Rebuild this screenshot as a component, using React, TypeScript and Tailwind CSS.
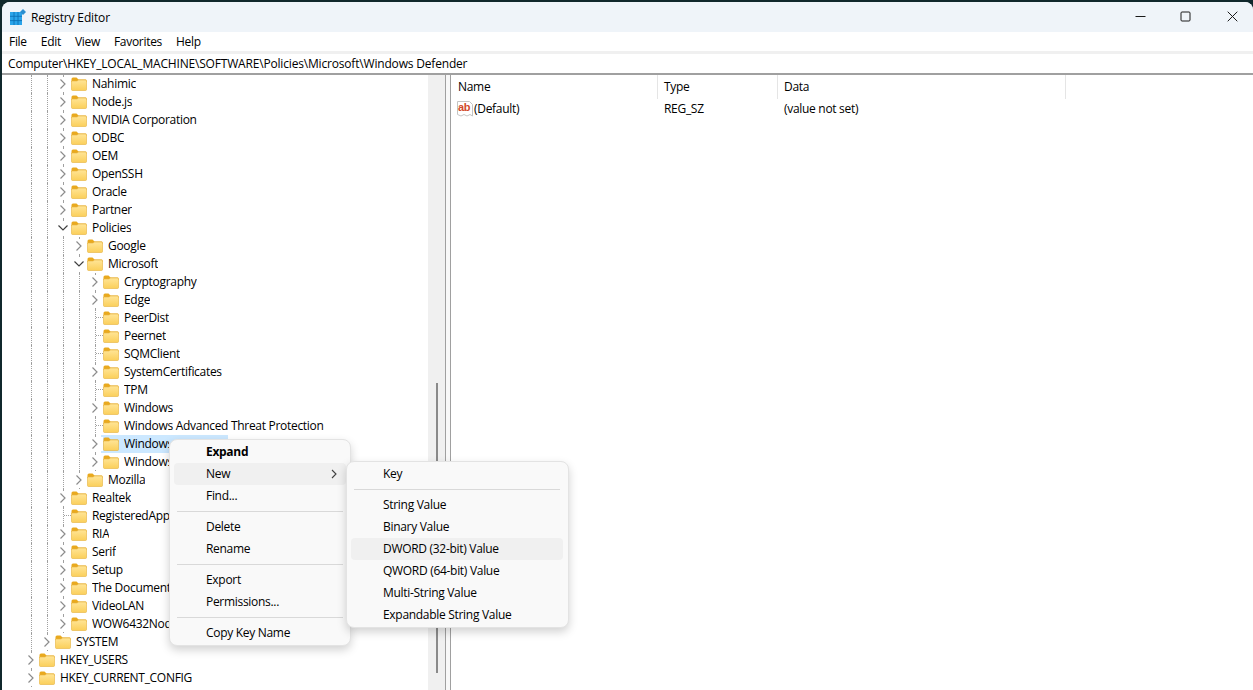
import { useId } from 'react';

type Node = { name: string; level: number; state?: 'closed' | 'open' | 'leaf'; selected?: boolean; clip?: string };

// clip: these labels run under the context menu
const rows: Node[] = [
  { name: 'Nahimic', level: 3 },
  { name: 'Node.js', level: 3 },
  { name: 'NVIDIA Corporation', level: 3 },
  { name: 'ODBC', level: 3 },
  { name: 'OEM', level: 3 },
  { name: 'OpenSSH', level: 3 },
  { name: 'Oracle', level: 3 },
  { name: 'Partner', level: 3 },
  { name: 'Policies', level: 3, state: 'open' },
  { name: 'Google', level: 4 },
  { name: 'Microsoft', level: 4, state: 'open' },
  { name: 'Cryptography', level: 5 },
  { name: 'Edge', level: 5 },
  { name: 'PeerDist', level: 5, state: 'leaf' },
  { name: 'Peernet', level: 5, state: 'leaf' },
  { name: 'SQMClient', level: 5, state: 'leaf' },
  { name: 'SystemCertificates', level: 5 },
  { name: 'TPM', level: 5, state: 'leaf' },
  { name: 'Windows', level: 5 },
  { name: 'Windows Advanced Threat Protection', level: 5, state: 'leaf' },
  { name: 'Windows Defender', level: 5, selected: true, clip: 'max-w-[45px]' },
  { name: 'Windows NT', level: 5, clip: 'max-w-[45px]' },
  { name: 'Mozilla', level: 4 },
  { name: 'Realtek', level: 3 },
  { name: 'RegisteredApplications', level: 3, state: 'leaf', clip: 'max-w-[77px]' },
  { name: 'RIA', level: 3 },
  { name: 'Serif', level: 3 },
  { name: 'Setup', level: 3 },
  { name: 'The Document Foundation', level: 3, clip: 'max-w-[77px]' },
  { name: 'VideoLAN', level: 3 },
  { name: 'WOW6432Node', level: 3, clip: 'max-w-[77px]' },
  { name: 'SYSTEM', level: 2 },
  { name: 'HKEY_USERS', level: 1 },
  { name: 'HKEY_CURRENT_CONFIG', level: 1 },
];

const Folder = () => {
  const id = useId();
  return (
    <svg width="16" height="14" viewBox="0 0 16 14" className="shrink-0">
      <defs>
        <linearGradient id={id} x1="0" y1="0" x2="0" y2="1">
          <stop offset="0" stopColor="#ffe597" />
          <stop offset="1" stopColor="#fbcf5a" />
        </linearGradient>
      </defs>
      <path d="M0.5 2 Q0.5 0.5 2 0.5 H5.5 L7.5 2.5 H14.5 Q15.5 2.5 15.5 3.5 V5 H0.5 Z" fill="#e9a91e" />
      <path d="M0.5 4 H6 L7.5 3 H14.5 Q15.5 3 15.5 4 V12.5 Q15.5 13.5 14.5 13.5 H1.5 Q0.5 13.5 0.5 12.5 Z" fill={`url(#${id})`} stroke="#e5b23c" strokeWidth="0.6" />
    </svg>
  );
};

const Guide = () => (
  <div className="w-4 h-full shrink-0 pl-2">
    <div className="h-full border-l border-dotted border-[#a0a0a0]" />
  </div>
);

const Toggle = ({ state }: { state: 'closed' | 'open' | 'leaf' }) => {
  if (state === 'leaf') {
    return (
      <div className="w-4 h-full shrink-0 pl-2">
        <div className="h-full border-l border-dotted border-[#a0a0a0]">
          <div className="h-[9px] border-b border-dotted border-[#a0a0a0]" />
        </div>
      </div>
    );
  }
  return (
    <div className="relative w-4 h-full shrink-0 pl-2">
      <div className="h-full border-l border-dotted border-[#a0a0a0]" />
      <div className="absolute inset-x-0 top-[2px] h-[14px] bg-white flex items-center justify-center">
        {state === 'open' ? (
          <svg width="10" height="10" viewBox="0 0 10 10"><path d="M0.5 2.5 L5 7 L9.5 2.5" fill="none" stroke="#404040" strokeWidth="1.2" /></svg>
        ) : (
          <svg width="10" height="10" viewBox="0 0 10 10"><path d="M2.5 0.5 L7 5 L2.5 9.5" fill="none" stroke="#8c8c8c" strokeWidth="1.2" /></svg>
        )}
      </div>
    </div>
  );
};

const TreeRow = ({ node }: { node: Node }) => (
  <div className="flex h-[18px] items-center pl-[5px] whitespace-nowrap">
    {Array.from({ length: node.level }, (_, k) => (k === 0 ? <div key={k} className="w-4 shrink-0" /> : <Guide key={k} />))}
    <Toggle state={node.state ?? 'closed'} />
    <div className={`flex h-full items-center ${node.selected ? 'bg-[#cce8ff] w-[127px] -ml-[2px] pl-[2px]' : ''}`}>
      <Folder />
      <span className={`ml-[5px] overflow-hidden text-[#000] ${node.clip ?? ''}`}>{node.name}</span>
    </div>
  </div>
);

const MenuItem = ({ label, bold, hot, arrow }: { label: string; bold?: boolean; hot?: boolean; arrow?: boolean }) => (
  <div className={`flex h-[22px] items-center justify-between rounded-[4px] pl-[32px] pr-[8px] ${hot ? 'bg-[#f0f0f0]' : ''} ${bold ? 'font-bold' : ''}`}>
    <span>{label}</span>
    {arrow && (
      <svg width="8" height="10" viewBox="0 0 8 10"><path d="M2 1 L6 5 L2 9" fill="none" stroke="#404040" strokeWidth="1.1" /></svg>
    )}
  </div>
);

const MenuSep = () => (
  <div className="h-[9px] flex items-center px-[3px]">
    <div className="h-px w-full bg-[#d9d9d9]" />
  </div>
);

export default function App() {
  return (
    <div
      className="h-[690px] w-[1253px] overflow-hidden bg-[#10282c] pl-[2px] pt-[2px] text-[12px] leading-[18px] text-[#000] tracking-[-0.3px]"
      style={{ fontFamily: '"Open Sans", "Liberation Sans", sans-serif' }}
    >
      <div className="relative flex h-full flex-col overflow-hidden rounded-tl-[8px] rounded-tr-[8px] bg-white">
        {/* title bar */}
        <div className="flex h-[30px] shrink-0 items-center bg-[#eff4f9]">
          <svg width="17" height="16" viewBox="0 0 17 16" className="ml-[7px]">
            <path d="M1 3 H13 V16 H1 Z" fill="#2aa4ea" />
            <path d="M5 3 V16 M9 3 V16 M1 7.3 H13 M1 11.6 H13" stroke="#0a6cb0" strokeWidth="0.8" />
            <path d="M14 0 L17 3 L14 6 L11 3 Z" fill="#2a8fd0" />
          </svg>
          <span className="ml-[5px] mt-[1px] tracking-[-0.15px]">Registry Editor</span>
          <div className="ml-auto -mt-[2px] flex items-center gap-[35px] pr-[15px]">
            <svg width="11" height="11" viewBox="0 0 11 11"><path d="M0.5 5.5 H10.5" stroke="#1a1a1a" /></svg>
            <svg width="11" height="11" viewBox="0 0 11 11" className="-translate-x-px"><rect x="1" y="1" width="9" height="9" rx="1" fill="none" stroke="#1a1a1a" /></svg>
            <svg width="11" height="11" viewBox="0 0 11 11"><path d="M0.7 0.7 L10.3 10.3 M10.3 0.7 L0.7 10.3" stroke="#1a1a1a" /></svg>
          </div>
        </div>
        {/* menu bar */}
        <div className="flex h-[18px] shrink-0 items-center gap-[14px] pl-[7px] mt-[1px]">
          <span>File</span>
          <span>Edit</span>
          <span>View</span>
          <span>Favorites</span>
          <span>Help</span>
        </div>
        <div className="h-[3px] shrink-0 bg-[#f0f0f0]" />
        {/* address bar */}
        <div className="flex h-[19px] shrink-0 items-center pl-[6px] tracking-[-0.18px]">Computer\HKEY_LOCAL_MACHINE\SOFTWARE\Policies\Microsoft\Windows Defender</div>
        <div className="h-[2px] shrink-0 bg-[#a0a0a0]" />

        <div className="flex min-h-0 flex-1">
          {/* tree */}
          <div className="w-[426px] shrink-0 overflow-hidden">
            {rows.map((node) => (
              <TreeRow key={node.name} node={node} />
            ))}
          </div>
          {/* scrollbar */}
          <div className="flex w-[17px] shrink-0 justify-center bg-[#f0f0f0] pt-[308px]">
            <div className="h-[290px] w-[2px] bg-[#8a8a8a]" />
          </div>
          {/* splitter */}
          <div className="w-[6px] shrink-0 border-x border-[#a0a0a0] bg-[#f8f8f8]" />
          {/* values list */}
          <div className="flex-1">
            <div className="flex h-[24px] items-center">
              <div className="flex h-full w-[207px] items-center border-r border-[#e5e5e5] pl-[7px]">Name</div>
              <div className="flex h-full w-[120px] items-center border-r border-[#e5e5e5] pl-[6px]">Type</div>
              <div className="flex h-full w-[288px] items-center border-r border-[#e5e5e5] pl-[6px]">Data</div>
            </div>
            <div className="mt-px flex h-[18px] items-center">
              <div className="flex w-[207px] items-center pl-[6px]">
                <svg width="16" height="16" viewBox="0 0 16 16" className="shrink-0">
                  <path d="M0.5 0.5 H12.5 L15.5 3.5 V15 L13 13.5 L10 15 L7 13.5 L4 15 L0.5 13.5 Z" fill="#fff" stroke="#c4c4c4" />
                  <text x="1" y="10" fontSize="11" fontWeight="700" fill="#d1492b" fontFamily="'Liberation Sans', sans-serif">ab</text>
                </svg>
                <span className="ml-[1px]">(Default)</span>
              </div>
              <div className="w-[120px] pl-[6px]">REG_SZ</div>
              <div className="pl-[6px]">(value not set)</div>
            </div>
          </div>
        </div>

        {/* context menu */}
        <div className="absolute left-[167px] top-[437px] w-[182px] rounded-[8px] border border-[#e3e3e3] bg-[#f9f9f9] px-[4px] py-[1px] shadow-[0_4px_10px_rgba(0,0,0,0.18)]">
          <MenuItem label="Expand" bold />
          <MenuItem label="New" hot arrow />
          <MenuItem label="Find..." />
          <MenuSep />
          <MenuItem label="Delete" />
          <MenuItem label="Rename" />
          <MenuSep />
          <MenuItem label="Export" />
          <MenuItem label="Permissions..." />
          <MenuSep />
          <MenuItem label="Copy Key Name" />
        </div>

        {/* New submenu */}
        <div className="absolute left-[344px] top-[459px] w-[223px] rounded-[8px] border border-[#e3e3e3] bg-[#f9f9f9] py-[1px] pl-[4px] pr-[5px] shadow-[0_4px_10px_rgba(0,0,0,0.18)]">
          <MenuItem label="Key" />
          <MenuSep />
          <MenuItem label="String Value" />
          <MenuItem label="Binary Value" />
          <MenuItem label="DWORD (32-bit) Value" hot />
          <MenuItem label="QWORD (64-bit) Value" />
          <MenuItem label="Multi-String Value" />
          <MenuItem label="Expandable String Value" />
        </div>
      </div>
    </div>
  );
}
